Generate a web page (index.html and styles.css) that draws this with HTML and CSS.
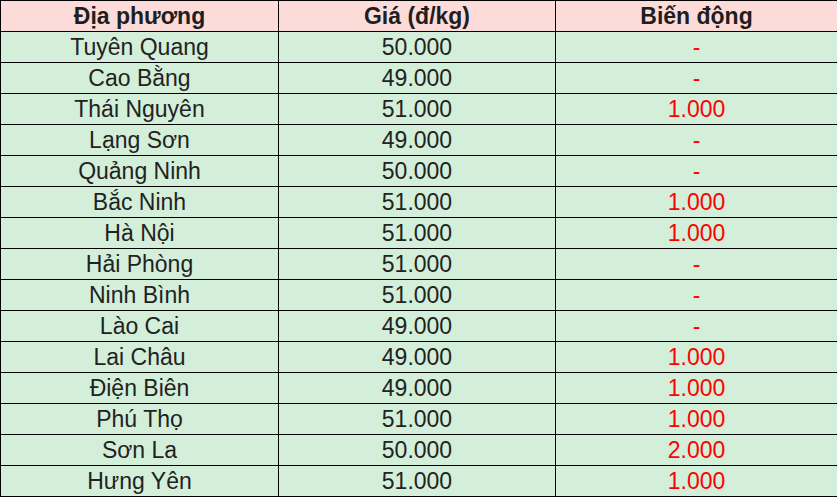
FILE: index.html
```html
<!DOCTYPE html>
<html lang="vi">
<head>
<meta charset="utf-8">
<link rel="stylesheet" href="styles.css">
</head>
<body>
<table class="price-table">
  <colgroup>
    <col class="c1"><col class="c2"><col class="c3">
  </colgroup>
  <thead>
    <tr><th>Địa phương</th><th>Giá (đ/kg)</th><th>Biến động</th></tr>
  </thead>
  <tbody>
    <tr><td>Tuyên Quang</td><td>50.000</td><td class="chg">-</td></tr>
    <tr><td>Cao Bằng</td><td>49.000</td><td class="chg">-</td></tr>
    <tr><td>Thái Nguyên</td><td>51.000</td><td class="chg">1.000</td></tr>
    <tr><td>Lạng Sơn</td><td>49.000</td><td class="chg">-</td></tr>
    <tr><td>Quảng Ninh</td><td>50.000</td><td class="chg">-</td></tr>
    <tr><td>Bắc Ninh</td><td>51.000</td><td class="chg">1.000</td></tr>
    <tr><td>Hà Nội</td><td>51.000</td><td class="chg">1.000</td></tr>
    <tr><td>Hải Phòng</td><td>51.000</td><td class="chg">-</td></tr>
    <tr><td>Ninh Bình</td><td>51.000</td><td class="chg">-</td></tr>
    <tr><td>Lào Cai</td><td>49.000</td><td class="chg">-</td></tr>
    <tr><td>Lai Châu</td><td>49.000</td><td class="chg">1.000</td></tr>
    <tr><td>Điện Biên</td><td>49.000</td><td class="chg">1.000</td></tr>
    <tr><td>Phú Thọ</td><td>51.000</td><td class="chg">1.000</td></tr>
    <tr><td>Sơn La</td><td>50.000</td><td class="chg">2.000</td></tr>
    <tr><td>Hưng Yên</td><td>51.000</td><td class="chg">1.000</td></tr>
  </tbody>
</table>
</body>
</html>
```
FILE: styles.css
```css
html, body {
  margin: 0;
  padding: 0;
  background: #ffffff;
}
.price-table {
  border-collapse: collapse;
  table-layout: fixed;
  width: 837px;
  font-family: "Liberation Sans", Arial, sans-serif;
  font-size: 23px;
  color: #222222;
}
.c1 { width: 278px; }
.c2 { width: 277px; }
.c3 { width: 282px; }
.price-table th,
.price-table td {
  border: 1px solid #000000;
  padding: 1px 0 0 0;
  height: 30px;
  line-height: 29px;
  text-align: center;
  white-space: nowrap;
  box-sizing: border-box;
}
.price-table th {
  background: #fddbd9;
  font-weight: bold;
  color: #1e1e1e;
}
.price-table td {
  background: #d3efda;
}
.price-table td.chg {
  color: #ff0000;
}
```
